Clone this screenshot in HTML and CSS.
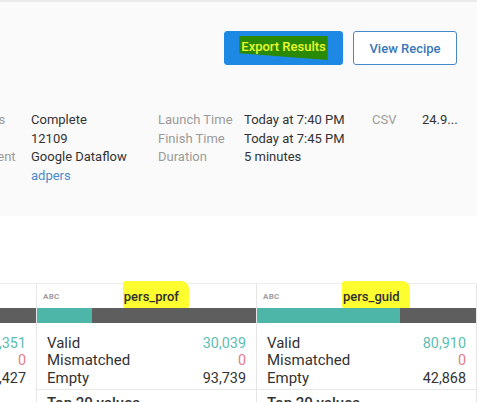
FILE: index.html
```html
<!DOCTYPE html>
<html lang="en">
<head>
<meta charset="utf-8">
<title>Job Results</title>
<link rel="stylesheet" href="styles.css">
</head>
<body>
<div class="topstrip"></div>
<section class="panel">
  <div class="actions">
    <button class="btn btn-primary"><span class="mark-green">Export Results</span></button>
    <button class="btn btn-outline">View Recipe</button>
  </div>
  <div class="meta">
    <span class="label">Job Status</span><span class="value">Complete</span>
    <span class="label">Launch Time</span><span class="value">Today at 7:40 PM</span>
    <span class="label">CSV</span><span class="value">24.9...</span>

    <span class="label">Job ID</span><span class="value">12109</span>
    <span class="label">Finish Time</span><span class="value">Today at 7:45 PM</span>
    <span></span><span></span>

    <span class="label">Environment</span><span class="value">Google Dataflow</span>
    <span class="label">Duration</span><span class="value">5 minutes</span>
    <span></span><span></span>

    <span class="label">User</span><span class="value link">adpers</span>
    <span></span><span></span>
    <span></span><span></span>
  </div>
</section>

<section class="profile">
  <div class="col col-edge">
    <div class="col-head"><span class="type">ABC</span><span class="title">pers_id</span></div>
    <div class="bar"><div class="bar-fill" style="width:0%"></div></div>
    <div class="stats">
      <span class="stat-label">Valid</span><span class="num valid">123,351</span>
      <span class="stat-label">Mismatched</span><span class="num bad">0</span>
      <span class="stat-label">Empty</span><span class="num">11,427</span>
    </div>
  </div>
  <div class="col">
    <div class="col-head"><span class="type">ABC</span><span class="title"><span class="mark-yellow">pers_prof</span></span></div>
    <div class="bar"><div class="bar-fill" style="width:25%"></div></div>
    <div class="stats">
      <span class="stat-label">Valid</span><span class="num valid">30,039</span>
      <span class="stat-label">Mismatched</span><span class="num bad">0</span>
      <span class="stat-label">Empty</span><span class="num">93,739</span>
    </div>
    <div class="top-values">Top 20 values</div>
  </div>
  <div class="col">
    <div class="col-head"><span class="type">ABC</span><span class="title"><span class="mark-yellow">pers_guid</span></span></div>
    <div class="bar"><div class="bar-fill" style="width:65.3%"></div></div>
    <div class="stats">
      <span class="stat-label">Valid</span><span class="num valid">80,910</span>
      <span class="stat-label">Mismatched</span><span class="num bad">0</span>
      <span class="stat-label">Empty</span><span class="num">42,868</span>
    </div>
    <div class="top-values">Top 20 values</div>
  </div>
</section>
</body>
</html>
```
FILE: styles.css
```css
html, body {
  margin: 0;
  padding: 0;
  background: #ffffff;
  overflow: hidden;
}
body {
  width: 477px;
  height: 402px;
  font-family: Roboto, "Liberation Sans", sans-serif;
  color: #333333;
}
.topstrip {
  height: 2px;
  background: #ebebeb;
}
.panel {
  height: 214px;
  background: #fafafa;
  padding-top: 29px;
  box-sizing: border-box;
  overflow: hidden;
}
.actions {
  display: flex;
  justify-content: flex-end;
  gap: 10px;
  padding-right: 20px;
}
.btn {
  height: 34px;
  border-radius: 3px;
  font-family: Roboto, "Liberation Sans", sans-serif;
  font-size: 13px;
  font-weight: 500;
  padding: 0;
  cursor: pointer;
}
.btn-primary {
  width: 119px;
  background: #1e88e5;
  border: 1px solid #1e88e5;
  color: #eef72a;
}
.btn-outline {
  width: 104px;
  background: #ffffff;
  border: 1px solid #4a86c8;
  color: #3b78b8;
}
.mark-green {
  display: inline-block;
  background: #2a8a06;
  color: #e9fb2f;
  padding: 3px 2px 6px;
  clip-path: polygon(0 0, 100% 0, 100% 100%, 0 72%);
}
.meta {
  margin-top: 46px;
  margin-left: -57px;
  display: grid;
  grid-template-columns: 88px 127px 86px 128px 50px auto;
  font-size: 13px;
  line-height: 18.7px;
  white-space: nowrap;
}
.label {
  color: #9b9b9b;
}
.value {
  color: #333333;
}
.link {
  color: #4a8ac9;
}
.profile {
  margin-top: 67px;
  margin-left: -183px;
  display: flex;
  border-top: 1px solid #ececec;
  width: 700px;
}
.col {
  width: 220px;
  flex: 0 0 220px;
  box-sizing: border-box;
  border-right: 1px solid #e6e6e6;
}
.col-head {
  height: 24px;
  display: flex;
  align-items: center;
  padding-left: 6px;
}
.type {
  font-size: 8px;
  font-weight: 700;
  color: #9e9e9e;
  letter-spacing: 0.3px;
}
.title {
  flex: 1;
  text-align: center;
  font-size: 13px;
  font-weight: 500;
  color: #2f2f2f;
  padding-right: 4px;
}
.mark-yellow {
  background: #fdfd30;
  padding: 8px 10px 4px 1px;
  border-radius: 3px 8px 2px 2px;
}
.bar {
  height: 15px;
  background: #5e5e5e;
}
.bar-fill {
  height: 100%;
  background: #4db6a9;
}
.stats {
  display: grid;
  grid-template-columns: 1fr auto;
  padding: 12px 10px 0 10px;
  font-size: 15px;
  line-height: 17.4px;
}
.num {
  text-align: right;
  font-size: 14.4px;
  color: #333333;
}
.num.valid {
  color: #5cbdb1;
}
.num.bad {
  color: #e57c88;
}
.top-values {
  margin-top: 2px;
  border-top: 1px solid #e8e8e8;
  padding: 4px 10px 0;
  font-size: 15px;
  font-weight: 500;
  line-height: 18px;
}
```
